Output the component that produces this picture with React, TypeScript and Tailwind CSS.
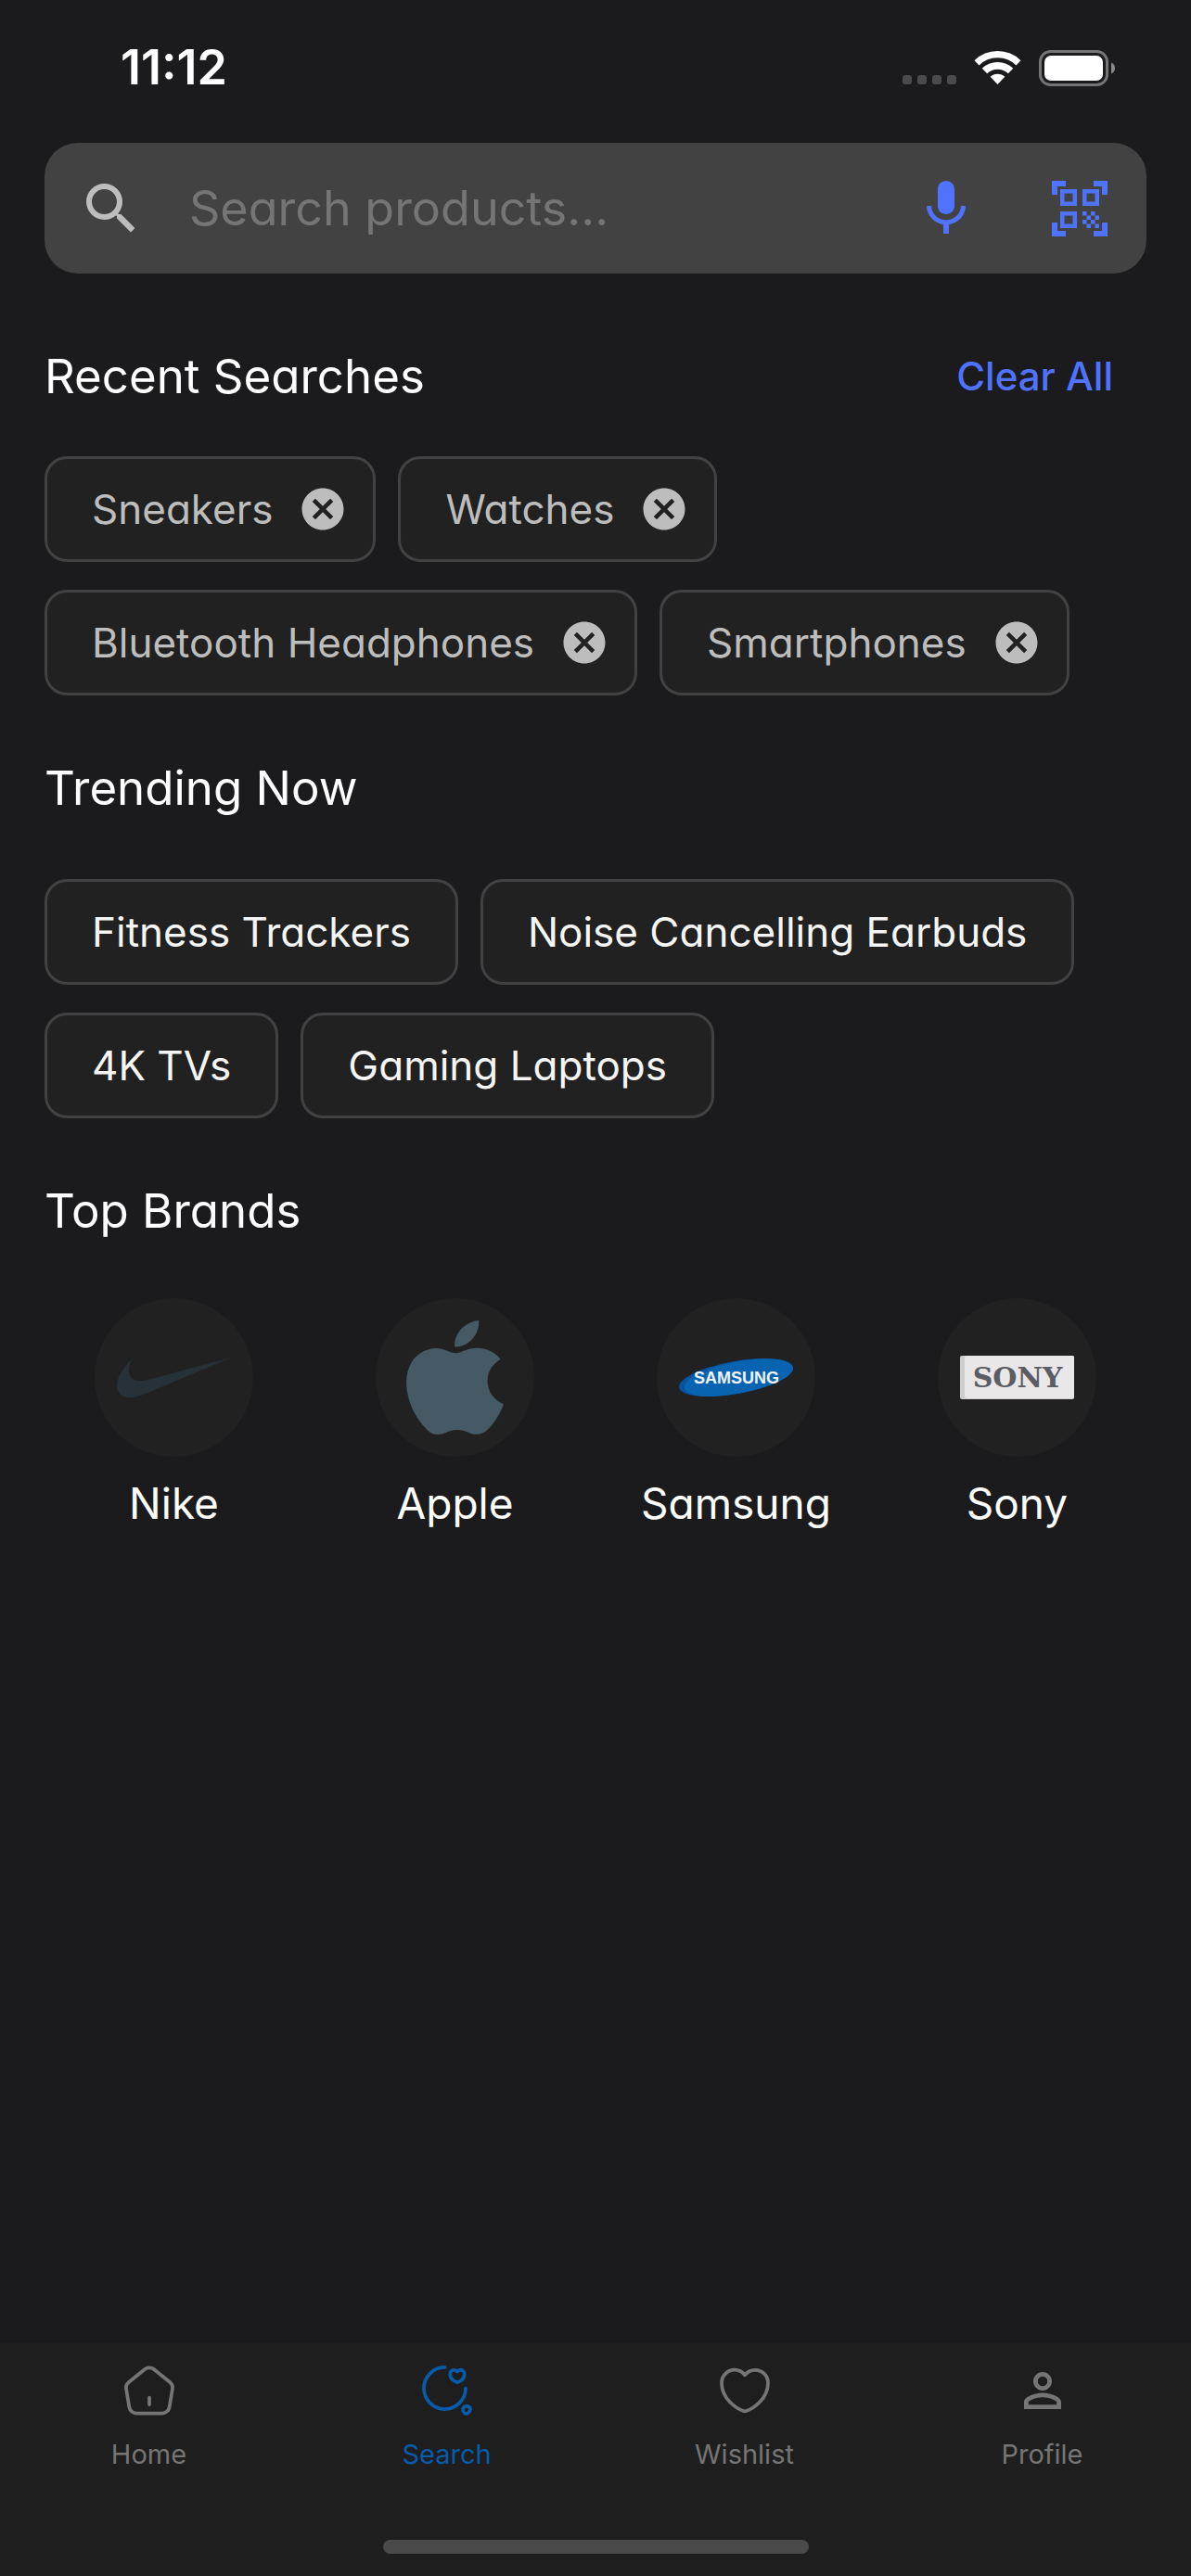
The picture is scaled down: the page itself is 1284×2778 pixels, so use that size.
import { MdCancel, MdMic, MdPersonOutline, MdQrCodeScanner, MdSearch } from "react-icons/md";
import type { ReactNode } from "react";

const recentSearches = ["Sneakers", "Watches", "Bluetooth Headphones", "Smartphones"];
const trending = ["Fitness Trackers", "Noise Cancelling Earbuds", "4K TVs", "Gaming Laptops"];

function StatusBar() {
  return (
    <div className="flex h-[146px] items-center justify-between pl-[130px] pr-[82px] text-white">
      <span className="text-[52px] font-semibold leading-[60px]">11:12</span>
      <div className="flex items-end">
        <div className="mr-[19px] flex gap-[6px] pb-[2px]">
          {[0, 1, 2, 3].map((dot) => (
            <span key={dot} className="size-[10px] rounded-[3px] bg-[#4b4b4c]" />
          ))}
        </div>
        <svg width="51" height="38" viewBox="0 0 51 38" className="mr-[19px] pb-px" aria-hidden="true">
          <path d="M2.4 13.1A33.25 33.25 0 0 1 48.6 13.1" fill="none" stroke="#fff" strokeWidth="7.5" />
          <path d="M11.1 22.1A20.7 20.7 0 0 1 39.9 22.1" fill="none" stroke="#fff" strokeWidth="8" />
          <path d="M17.4 28.6A11.7 11.7 0 0 1 33.6 28.6L25.5 37Z" fill="#fff" />
        </svg>
        <svg width="82" height="39" viewBox="0 0 82 39" aria-hidden="true">
          <rect x="1.5" y="1.5" width="72" height="36" rx="11" fill="none" stroke="#757577" strokeWidth="3" />
          <rect x="6" y="6" width="63" height="27" rx="7" fill="#fff" />
          <path d="M78 13.5C80.500 14.500 82 16.800 82 19.500S80.500 24.500 78 25.500Z" fill="#8a8a8b" />
        </svg>
      </div>
    </div>
  );
}

function SearchBar() {
  return (
    <form className="mt-2 flex h-[141px] items-center rounded-[36px] bg-[#424242]" role="search">
      <label htmlFor="product-search" className="pl-9 pr-12">
        <MdSearch className="size-[72px] text-[#bdbdbd]" aria-label="Search" />
      </label>
      <input
        id="product-search"
        type="text"
        placeholder="Search products..."
        className="h-full min-w-0 flex-1 bg-transparent text-[52px] text-white outline-none placeholder:text-[#757575]"
      />
      <button type="button" aria-label="Voice search" className="flex size-36 items-center justify-center">
        <MdMic className="size-[72px] text-[#4f73ff]" />
      </button>
      <button type="button" aria-label="Scan code" className="flex size-36 items-center justify-center">
        <MdQrCodeScanner className="size-[72px] text-[#4f73ff]" />
      </button>
    </form>
  );
}

function Heading({ children }: { children: ReactNode }) {
  return <h2 className="text-[51px] leading-[72px] text-white">{children}</h2>;
}

const chipClass =
  "flex h-[114px] items-center rounded-3xl border-[3px] border-[#424242] bg-[#212121] text-[44px] leading-[60px]";

function NikeLogo() {
  return (
    <svg viewBox="0 0 24 24" className="size-[123px]" fill="#263238" aria-hidden="true">
      <path d="M24 7.8L6.442 15.276c-1.456.616-2.679.925-3.668.925-1.12 0-1.933-.392-2.437-1.177-.317-.504-.41-1.143-.28-1.918.13-.775.476-1.6 1.036-2.478.467-.71 1.232-1.643 2.297-2.8a6.122 6.122 0 00-.784 1.848c-.28 1.195-.028 2.072.756 2.632.373.261.886.392 1.54.392.522 0 1.11-.084 1.764-.252L24 7.8z" />
    </svg>
  );
}

function AppleLogo() {
  return (
    <svg
      viewBox="2.2 0 19.6 24"
      preserveAspectRatio="none"
      className="h-[123px] w-[105px]"
      fill="#455a64"
      aria-hidden="true"
    >
      <path d="M12.152 6.896c-.948 0-2.415-1.078-3.96-1.04-2.04.027-3.91 1.183-4.961 3.014-2.117 3.675-.546 9.103 1.519 12.09 1.013 1.454 2.208 3.09 3.792 3.039 1.52-.065 2.09-.987 3.935-.987 1.831 0 2.35.987 3.96.948 1.637-.026 2.676-1.48 3.676-2.948 1.156-1.688 1.636-3.325 1.662-3.415-.039-.013-3.182-1.221-3.22-4.857-.026-3.04 2.48-4.494 2.597-4.559-1.429-2.09-3.623-2.324-4.39-2.376-2-.156-3.675 1.09-4.61 1.09zM15.53 3.83c.843-1.012 1.4-2.427 1.245-3.83-1.207.052-2.662.805-3.532 1.818-.78.896-1.454 2.338-1.273 3.714 1.338.104 2.715-.688 3.559-1.701" />
    </svg>
  );
}

function SamsungLogo() {
  return (
    <svg viewBox="0 0 123 123" className="size-[123px]" aria-hidden="true">
      <clipPath id="samsung-oval">
        <ellipse cx="61.5" cy="61.5" rx="62.4" ry="17.6" transform="rotate(-10 61.5 61.5)" />
      </clipPath>
      <g clipPath="url(#samsung-oval)">
        <rect width="123" height="123" fill="#0552a0" />
        <ellipse cx="67" cy="62" rx="62" ry="18" transform="rotate(-10 67 62)" fill="#0864b1" />
      </g>
      <text
        x="62"
        y="68"
        textAnchor="middle"
        fontSize="18"
        fill="#f0f4fa"
        className="font-['Liberation_Sans',sans-serif] font-bold"
      >
        SAMSUNG
      </text>
    </svg>
  );
}

function SonyLogo() {
  return (
    <svg viewBox="0 0 123 123" className="size-[123px]" aria-hidden="true">
      <rect y="38" width="123" height="47" rx="2" fill="#cfcdce" />
      <rect x="5" y="38" width="118" height="46" rx="2" fill="#e9e7e8" />
      <text
        x="62"
        y="72"
        textAnchor="middle"
        fontSize="30"
        fill="#5b5d62"
        className="font-['DejaVu_Serif',serif] font-bold"
      >
        SONY
      </text>
    </svg>
  );
}

const brands = [
  { name: "Nike", logo: <NikeLogo /> },
  { name: "Apple", logo: <AppleLogo /> },
  { name: "Samsung", logo: <SamsungLogo /> },
  { name: "Sony", logo: <SonyLogo /> },
];

function OutlineIcon({ children }: { children: ReactNode }) {
  return (
    <svg
      viewBox="0 0 24 24"
      className="size-[60px]"
      fill="none"
      stroke="currentColor"
      strokeWidth="1.5"
      strokeLinecap="round"
      strokeLinejoin="round"
      aria-hidden="true"
    >
      {children}
    </svg>
  );
}

const tabs = [
  {
    name: "Home",
    icon: (
      <OutlineIcon>
        <path d="M12 18v-3" />
        <path d="M10.07 2.82 3.14 8.37c-.78.62-1.28 1.93-1.11 2.91l1.33 7.96c.24 1.42 1.6 2.57 3.04 2.57h11.2c1.43 0 2.8-1.16 3.04-2.57l1.33-7.96c.16-.98-.34-2.29-1.11-2.91l-6.93-5.54c-1.07-.86-2.8-.86-3.86-.01Z" />
      </OutlineIcon>
    ),
  },
  {
    name: "Search",
    active: true,
    icon: (
      <OutlineIcon>
        <path d="M20 11a9 9 0 1 1-9-9" />
        <path d="M16.4 8.5C18 7.900 19.500 6.600 19.500 5C19.500 3.800 18.700 3.100 17.800 3.100C17.200 3.100 16.700 3.400 16.400 3.800C16.100 3.400 15.600 3.100 15 3.100C14.100 3.100 13.300 3.800 13.300 5C13.300 6.600 14.800 7.900 16.400 8.500Z" />
        <path d="M18.93 20.69c.53 1.6 1.74 1.76 2.67.36.85-1.28.29-2.33-1.25-2.33-1.14-.01-1.78.88-1.42 1.97Z" />
      </OutlineIcon>
    ),
  },
  {
    name: "Wishlist",
    icon: (
      <OutlineIcon>
        <path d="M12.62 20.81c-.34.12-.9.12-1.24 0C8.48 19.82 2 15.69 2 8.69 2 5.6 4.49 3.1 7.56 3.1c1.82 0 3.43.88 4.44 2.24a5.53 5.53 0 0 1 4.44-2.24C19.51 3.1 22 5.6 22 8.69c0 7-6.48 11.13-9.38 12.12Z" />
      </OutlineIcon>
    ),
  },
  { name: "Profile", icon: <MdPersonOutline className="size-[60px]" aria-hidden="true" /> },
];

function BottomNav() {
  return (
    <nav className="bg-[#1e1e1e] pb-6 pt-[21px]">
      <ul className="grid grid-cols-4">
        {tabs.map((tab) => (
          <li key={tab.name}>
            <a
              href={`#${tab.name.toLowerCase()}`}
              aria-current={tab.active ? "page" : undefined}
              className={`flex flex-col items-center gap-[21px] ${tab.active ? "text-[#085bab]" : "text-[#757575]"}`}
            >
              {tab.icon}
              <span className="text-[29px] leading-[36px]">{tab.name}</span>
            </a>
          </li>
        ))}
      </ul>
      <div className="mx-auto mt-[74px] h-[15px] w-[459px] rounded-full bg-[#4a4a4a]" />
    </nav>
  );
}

export default function App() {
  return (
    <div className="flex min-h-screen flex-col bg-[#1b1b1d] font-['Inter',sans-serif]">
      <StatusBar />
      <main className="flex-1 px-12 [font-feature-settings:'cv11']">
        <SearchBar />

        <section>
          <div className="mt-[75px] flex items-center justify-between">
            <Heading>Recent Searches</Heading>
            <button
              type="button"
              className="pr-9 text-[42px] font-medium leading-[60px] text-[#4f73ff] [font-feature-settings:normal]"
            >
              Clear All
            </button>
          </div>
          <ul className="mt-[50px] flex flex-wrap gap-x-6 gap-y-[30px]">
            {recentSearches.map((term) => (
              <li key={term} className={`${chipClass} gap-[27px] pl-12 pr-[27px] text-[#bdbdbd]`}>
                {term}
                <button type="button" aria-label={`Remove ${term}`}>
                  <MdCancel className="size-[54px]" />
                </button>
              </li>
            ))}
          </ul>
        </section>

        <section className="mt-16">
          <Heading>Trending Now</Heading>
          <div className="mt-[62px] flex flex-wrap gap-x-6 gap-y-[30px]">
            {trending.map((term) => (
              <button key={term} type="button" className={`${chipClass} px-12 text-[#f5f5f5]`}>
                {term}
              </button>
            ))}
          </div>
        </section>

        <section className="mt-16">
          <Heading>Top Brands</Heading>
          <ul className="mt-[58px] grid grid-cols-4 gap-6">
            {brands.map((brand) => (
              <li key={brand.name} className="flex flex-col items-center gap-5">
                <div className="flex size-[171px] items-center justify-center rounded-full bg-[#212121]">
                  {brand.logo}
                </div>
                <span className="text-[46px] leading-[60px] text-white">{brand.name}</span>
              </li>
            ))}
          </ul>
        </section>
      </main>
      <BottomNav />
    </div>
  );
}
